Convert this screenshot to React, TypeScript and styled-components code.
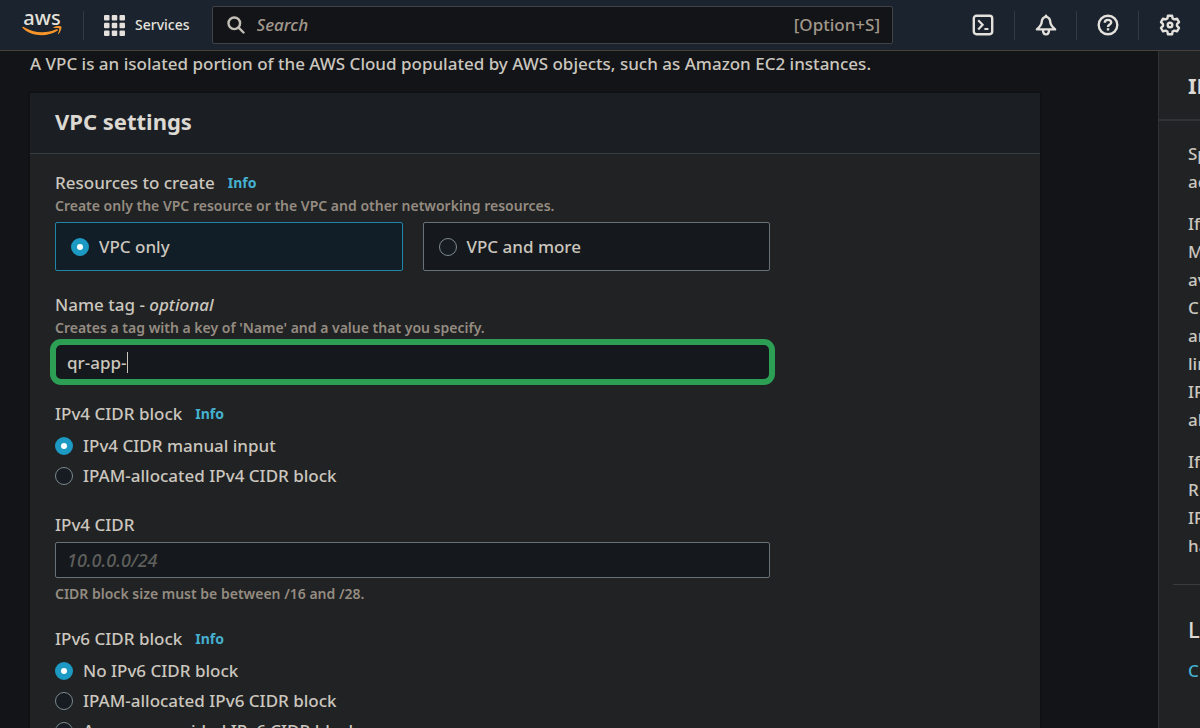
import React from "react";
import styled, { createGlobalStyle } from "styled-components";

const GlobalStyle = createGlobalStyle`
  *, *::before, *::after { box-sizing: border-box; }
  body {
    margin: 0;
    background: #121418;
    color: #cbc6be;
    font-family: "Noto Sans", "Open Sans", sans-serif;
    font-size: 17px;
    font-weight: 500;
    line-height: 24px;
  }
  p, h2, h3 { margin: 0; }
  button, input { font: inherit; color: inherit; }
`;

const Shell = styled.div`
  display: flex;
  flex-direction: column;
  height: 100vh;
  overflow: hidden;
`;

const TopBar = styled.header`
  display: flex;
  align-items: center;
  flex: none;
  height: 51px;
  padding-left: 22px;
  background: #1b232e;
  border-bottom: 1px solid #46423b;
  color: #e4e1dc;
`;

const LogoLink = styled.a`
  display: flex;
  flex-direction: column;
  align-items: center;
  width: 40px;
  height: 30px;
  color: #e4e1dc;
  text-decoration: none;
  font-size: 20px;
  line-height: 16px;

  svg { flex: none; }
`;

const Divider = styled.span`
  width: 1px;
  height: 29px;
  margin-left: 21px;
  background: #343a42;
`;

const ServicesButton = styled.button`
  display: flex;
  align-items: center;
  gap: 10px;
  margin: 0 22px 0 20px;
  padding: 0;
  border: 0;
  background: none;
  font-size: 14px;
`;

const SearchBox = styled.label`
  display: flex;
  flex: 1;
  align-items: center;
  gap: 12px;
  min-width: 0;
  height: 38px;
  padding: 0 12px 0 14px;
  border: 1px solid #3f4347;
  border-radius: 2px;
  background: #131418;
  color: #a1988c;

  svg { color: #c3beb6; }
`;

const SearchInput = styled.input`
  flex: 1;
  min-width: 0;
  padding: 0;
  border: 0;
  outline: 0;
  background: none;

  &::placeholder { color: #a1988c; font-style: italic; opacity: 1; }
`;

const Tools = styled.nav`
  display: flex;
  margin-left: 59px;
`;

const ToolButton = styled.button`
  display: flex;
  align-items: center;
  justify-content: center;
  width: 62px;
  height: 29px;
  padding: 0;
  border: 0;
  background: none;

  & + & { border-left: 1px solid #343a42; }
`;

const Content = styled.div`
  display: flex;
  flex: 1;
  min-height: 0;
`;

const Main = styled.main`
  flex: 1;
  min-width: 0;
  padding: 1px 118px 0 30px;
`;

const Card = styled.section`
  margin-top: 17px;
  background: #202224;
  box-shadow: 0 0 1px 1px #0e1012;
`;

const CardHeader = styled.div`
  padding: 12px 25px 16px;
  background: #1b1f24;
  border-bottom: 1px solid #373c41;
`;

const PanelTitle = styled.h2`
  color: #dcd8d2;
  font-size: 22px;
  font-weight: 700;
  line-height: 32px;
`;

const Form = styled.form`
  display: flex;
  flex-direction: column;
  gap: 22px;
  max-width: 765px;
  padding: 17px 25px;
`;

const Field = styled.div`
  display: flex;
  flex-direction: column;
  gap: 5px;
`;

const LabelRow = styled.div`
  display: flex;
  gap: 13px;
`;

const InfoLink = styled.a`
  color: #45b0d0;
  font-size: 14px;
  font-weight: 700;
  text-decoration: none;
`;

const Hint = styled.p`
  color: #958c81;
  font-size: 14px;
  font-weight: 600;
  line-height: 22px;
`;

const Tiles = styled.div`
  display: grid;
  grid-template-columns: 1fr 1fr;
  gap: 20px;
`;

const Choice = styled.label`
  display: flex;
  align-items: center;
  gap: 10px;
  height: 30px;
`;

const Tile = styled(Choice)`
  height: 49px;
  padding: 0 15px;
  border: 1px solid #667277;
  border-radius: 2px;
  background: #15191d;

  &:has(input:checked) {
    border-color: #1f86a8;
    background: #111e27;
  }
`;

const Radio = styled.input.attrs({ type: "radio" })`
  appearance: none;
  flex: none;
  width: 18px;
  height: 18px;
  margin: 0;
  border: 1px solid #7b8a8e;
  border-radius: 50%;
  background: #171b22;

  &:checked {
    border: 6px solid #1d9ac4;
    background: #fff;
  }
`;

const TextInput = styled.input`
  width: 100%;
  height: 36px;
  padding: 0 11px;
  border: 1px solid #667277;
  border-radius: 2px;
  outline: 0;
  background: #15191d;

  &::placeholder { color: #5f5f5c; font-size: 18px; font-style: italic; opacity: 1; }
`;

const ActiveInput = styled.div`
  position: relative;
  display: flex;
  border-radius: 6px;
  outline: 6px solid #2c9f55;
  outline-offset: -1px;

  ${TextInput} { border-color: #15191d; border-radius: 6px; }
`;

const Caret = styled.span`
  position: absolute;
  top: 8px;
  left: 72px;
  width: 1px;
  height: 21px;
  background: #cbc6be;
`;

const HelpPanel = styled.aside`
  flex: none;
  width: 42px;
  overflow: hidden;
  white-space: nowrap;
  background: #202224;
  border-left: 1px solid #303233;
`;

const HelpHeader = styled.div`
  padding: 18px 0 18px 29px;
  border-bottom: 2px solid #2f3439;
`;

const HelpBody = styled.div`
  display: flex;
  flex-direction: column;
  gap: 14px;
  padding: 19px 0 24px 29px;
  line-height: 28px;
`;

const HelpRule = styled.hr`
  height: 1px;
  margin: 0 0 0 14px;
  border: 0;
  background: #393b3d;
`;

const HelpFooter = styled.div`
  padding: 28px 0 0 29px;

  h3 { color: #dcd8d2; font-size: 22px; font-weight: 500; line-height: 32px; }
  a { color: #45b0d0; line-height: 52px; text-decoration: none; }
`;

const helpParagraphs = [
  ["Sp", "ad"],
  ["If", "M", "av", "C", "an", "lin", "IP", "al"],
  ["If", "R", "IP", "ha"],
];

const stroke = {
  fill: "none",
  stroke: "currentColor",
  strokeWidth: 2.4,
  strokeLinejoin: "round" as const,
  strokeLinecap: "round" as const,
};

function RadioGroup({ name, title, options }: { name: string; title: string; options: string[] }) {
  return (
    <Field role="radiogroup" aria-label={title}>
      <LabelRow>
        <span>{title}</span>
        <InfoLink href="#info">Info</InfoLink>
      </LabelRow>
      <div>
        {options.map((option, i) => (
          <Choice key={option}>
            <Radio name={name} defaultChecked={i === 0} />
            {option}
          </Choice>
        ))}
      </div>
    </Field>
  );
}

export default function App() {
  return (
    <Shell>
      <GlobalStyle />
      <TopBar>
        <LogoLink href="#home">
          <span>aws</span>
          <svg width="40" height="10" viewBox="0 0 40 10" fill="#f7942a" aria-hidden="true">
            <path d="M0.4 1.2C0.7 0.6 1.1 0.6 1.7 1C12 7.4 24 7.6 34.5 3.3C35.9 2.8 36.5 4 35.4 4.8C25 11.4 9.5 10.7 0.6 2C0.3 1.7 0.2 1.5 0.4 1.2Z" />
            <path d="M31.6 1.3C33.6 -0.1 38.6 -0.3 39.3 0.6C39.9 1.5 38.7 6 36.6 8C36.2 8.3 35.8 8.1 36 7.6C36.7 5.9 37.7 3.1 37.2 2.4C36.7 1.7 33.9 1.9 32.1 2.1C31.5 2.2 31.1 1.7 31.6 1.3Z" />
          </svg>
        </LogoLink>
        <Divider />
        <ServicesButton type="button">
          <svg width="21" height="21" viewBox="0 0 21 21" fill="currentColor" aria-hidden="true">
            {[0, 7.75, 15.5].map((y) =>
              [0, 7.75, 15.5].map((x) => <rect key={`${x}-${y}`} x={x} y={y} width="5.5" height="5.5" rx="1" />)
            )}
          </svg>
          Services
        </ServicesButton>
        <SearchBox>
          <svg width="18" height="18" viewBox="0 0 18 18" {...stroke} aria-hidden="true">
            <circle cx="7.3" cy="7.3" r="5.8" />
            <path d="M11.6 11.6L16.5 16.5" />
          </svg>
          <SearchInput type="text" placeholder="Search" aria-label="Search" />
          <span>[Option+S]</span>
        </SearchBox>
        <Tools>
          <ToolButton type="button" aria-label="CloudShell">
            <svg width="22" height="22" viewBox="0 0 22 22" {...stroke}>
              <rect x="1.8" y="1.8" width="18.4" height="18.4" rx="2.6" />
              <path d="M6.2 6.2L10.6 10.8L6.2 15.4M12.4 15H16.4" strokeLinecap="butt" strokeLinejoin="miter" strokeWidth="2.2" />
            </svg>
          </ToolButton>
          <ToolButton type="button" aria-label="Notifications">
            <svg width="22" height="22" viewBox="0 0 22 22" {...stroke}>
              <path d="M11 2.6C8.2 3.3 6.8 5.2 6.7 8C6.6 10.8 5.2 12.4 1.9 15.4H20.1C16.8 12.4 15.4 10.8 15.3 8C15.2 5.2 13.8 3.3 11 2.6Z" />
              <path d="M8 16C8 21.8 14 21.8 14 16" />
              <path d="M11 1.6V3" />
            </svg>
          </ToolButton>
          <ToolButton type="button" aria-label="Help">
            <svg width="22" height="22" viewBox="0 0 22 22" {...stroke}>
              <circle cx="11" cy="11" r="9.3" />
              <path d="M7.8 8.8C7.8 5 14.2 5 14.2 8.5C14.2 10.6 11 10.6 11 13" strokeLinecap="butt" />
              <path d="M11 14.2V16.5" strokeLinecap="butt" />
            </svg>
          </ToolButton>
          <ToolButton type="button" aria-label="Settings">
            <svg width="22" height="22" viewBox="0 0 22 22" {...stroke}>
              <path d="M8.9 1.8H13.1L13.6 4.5L15.3 5.4L18 4.7L20 8.2L18 10.1V11.9L20 13.8L18 17.3L15.3 16.6L13.6 17.5L13.1 20.2H8.9L8.4 17.5L6.7 16.6L4 17.3L2 13.8L4 11.9V10.1L2 8.2L4 4.7L6.7 5.4L8.4 4.5Z" />
              <circle cx="11" cy="11" r="2.3" />
            </svg>
          </ToolButton>
        </Tools>
      </TopBar>

      <Content>
        <Main>
          <p>A VPC is an isolated portion of the AWS Cloud populated by AWS objects, such as Amazon EC2 instances.</p>
          <Card>
            <CardHeader>
              <PanelTitle>VPC settings</PanelTitle>
            </CardHeader>
            <Form>
              <Field role="radiogroup" aria-label="Resources to create">
                <div>
                  <LabelRow>
                    <span>Resources to create</span>
                    <InfoLink href="#info">Info</InfoLink>
                  </LabelRow>
                  <Hint>Create only the VPC resource or the VPC and other networking resources.</Hint>
                </div>
                <Tiles>
                  <Tile>
                    <Radio name="resources" defaultChecked />
                    VPC only
                  </Tile>
                  <Tile>
                    <Radio name="resources" />
                    VPC and more
                  </Tile>
                </Tiles>
              </Field>

              <Field>
                <div>
                  <label htmlFor="name-tag">
                    Name tag - <em>optional</em>
                  </label>
                  <Hint>Creates a tag with a key of 'Name' and a value that you specify.</Hint>
                </div>
                <ActiveInput>
                  <TextInput id="name-tag" type="text" defaultValue="qr-app-" />
                  <Caret />
                </ActiveInput>
              </Field>

              <RadioGroup
                name="ipv4"
                title="IPv4 CIDR block"
                options={["IPv4 CIDR manual input", "IPAM-allocated IPv4 CIDR block"]}
              />

              <Field>
                <label htmlFor="ipv4-cidr">IPv4 CIDR</label>
                <TextInput id="ipv4-cidr" type="text" placeholder="10.0.0.0/24" />
                <Hint>CIDR block size must be between /16 and /28.</Hint>
              </Field>

              <RadioGroup
                name="ipv6"
                title="IPv6 CIDR block"
                options={[
                  "No IPv6 CIDR block",
                  "IPAM-allocated IPv6 CIDR block",
                  "Amazon-provided IPv6 CIDR block",
                ]}
              />
            </Form>
          </Card>
        </Main>

        <HelpPanel>
          <HelpHeader>
            <PanelTitle>IP</PanelTitle>
          </HelpHeader>
          <HelpBody>
            {helpParagraphs.map((lines, i) => (
              <p key={i}>
                {lines.map((line, j) => (
                  <React.Fragment key={j}>
                    {line}
                    <br />
                  </React.Fragment>
                ))}
              </p>
            ))}
          </HelpBody>
          <HelpRule />
          <HelpFooter>
            <h3>L</h3>
            <a href="#learn">C</a>
          </HelpFooter>
        </HelpPanel>
      </Content>
    </Shell>
  );
}
